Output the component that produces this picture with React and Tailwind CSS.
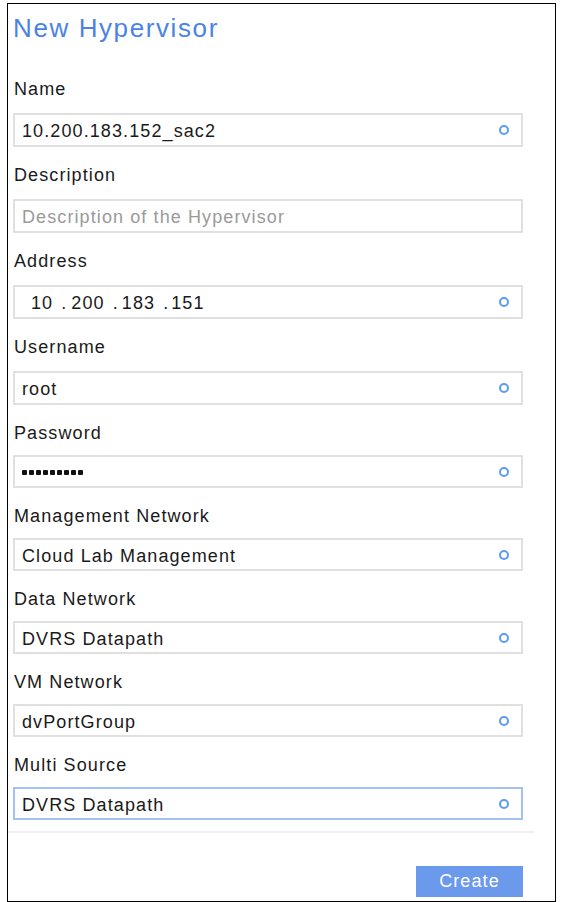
import React from 'react';

const fields = [
  { label: 'Name', value: '10.200.183.152_sac2', icon: true, gap: 'mt-[14px]', h: 'h-[34px]' },
  { label: 'Description', placeholder: 'Description of the Hypervisor', gap: 'mt-[14px]', h: 'h-[34px]' },
  { label: 'Address', ip: ['10', '200', '183', '151'], icon: true, gap: 'mt-[14px]', h: 'h-[34px]' },
  { label: 'Username', value: 'root', icon: true, gap: 'mt-[14px]', h: 'h-[34px]' },
  { label: 'Password', password: 9, icon: true, gap: 'mt-[12px]', h: 'h-[33px]' },
  { label: 'Management Network', value: 'Cloud Lab Management', icon: true, gap: 'mt-[12px]', h: 'h-[33px]' },
  { label: 'Data Network', value: 'DVRS Datapath', icon: true, gap: 'mt-[12px]', h: 'h-[33px]' },
  { label: 'VM Network', value: 'dvPortGroup', icon: true, gap: 'mt-[12px]', h: 'h-[33px]' },
  { label: 'Multi Source', value: 'DVRS Datapath', icon: true, focused: true, gap: 'mt-[12px]', h: 'h-[33px]' },
];

const Ring = () => (
  <span className="ml-auto mr-[12px] block h-[10px] w-[10px] shrink-0 rounded-full border-2 border-[#5d9bf2]" />
);

const FieldValue = ({ f }) => {
  if (f.placeholder) {
    return <span className="text-[#9a9a9a]">{f.placeholder}</span>;
  }
  if (f.ip) {
    return (
      <span className="flex items-center">
        <span className="ml-[9px]">{f.ip[0]}</span>
        <span className="ml-[8px]">.</span>
        <span className="ml-[4px]">{f.ip[1]}</span>
        <span className="ml-[8px]">.</span>
        <span className="ml-[3px]">{f.ip[2]}</span>
        <span className="ml-[8px]">.</span>
        <span className="ml-[2px]">{f.ip[3]}</span>
      </span>
    );
  }
  if (f.password) {
    return (
      <span className="flex items-center gap-[2px]">
        {Array.from({ length: f.password }).map((_, i) => (
          <span key={i} className="block h-[5px] w-[5px] rounded-[1px] bg-[#111]" />
        ))}
      </span>
    );
  }
  return <span>{f.value}</span>;
};

const App = () => {
  return (
    <div className="h-[902px] w-[572px] bg-white pl-[7px] pt-[3px] font-['Liberation_Sans',Arial,sans-serif] text-[18px] tracking-[1.1px] text-[#1a1a1a]">
      <div className="flex h-[899px] w-[549px] flex-col border border-black pl-[5px] pr-[32px] pt-[10px]">
        {/* Title */}
        <h1 className="h-[28px] text-[26px] leading-[28px] tracking-[1.6px] text-[#4b83e4]">New Hypervisor</h1>

        <div className="mt-[37px] flex flex-col">
          {fields.map((f, i) => (
            <div key={f.label} className={i > 0 ? 'mt-[18px]' : ''}>
              <div className="h-[20px] pl-[1px] leading-[20px]">{f.label}</div>
              <div
                className={`${f.gap} ${f.h} flex items-center border-2 pl-[7px] leading-none ${
                  f.focused ? 'border-[#a3c2f2]' : 'border-[#e0e0e0]'
                }`}
              >
                <div className="pt-[2px]">
                  <FieldValue f={f} />
                </div>
                {f.icon && <Ring />}
              </div>
            </div>
          ))}
        </div>

        {/* Footer */}
        <div className="-ml-[5px] -mr-[11px] mt-[11px] h-[2px] bg-[#f0f0f0]" />
        <div className="mt-[33px] flex justify-end">
          <button className="h-[31px] w-[107px] bg-[#6b99ec] text-[18px] text-white">Create</button>
        </div>
      </div>
    </div>
  );
};

export default App;
